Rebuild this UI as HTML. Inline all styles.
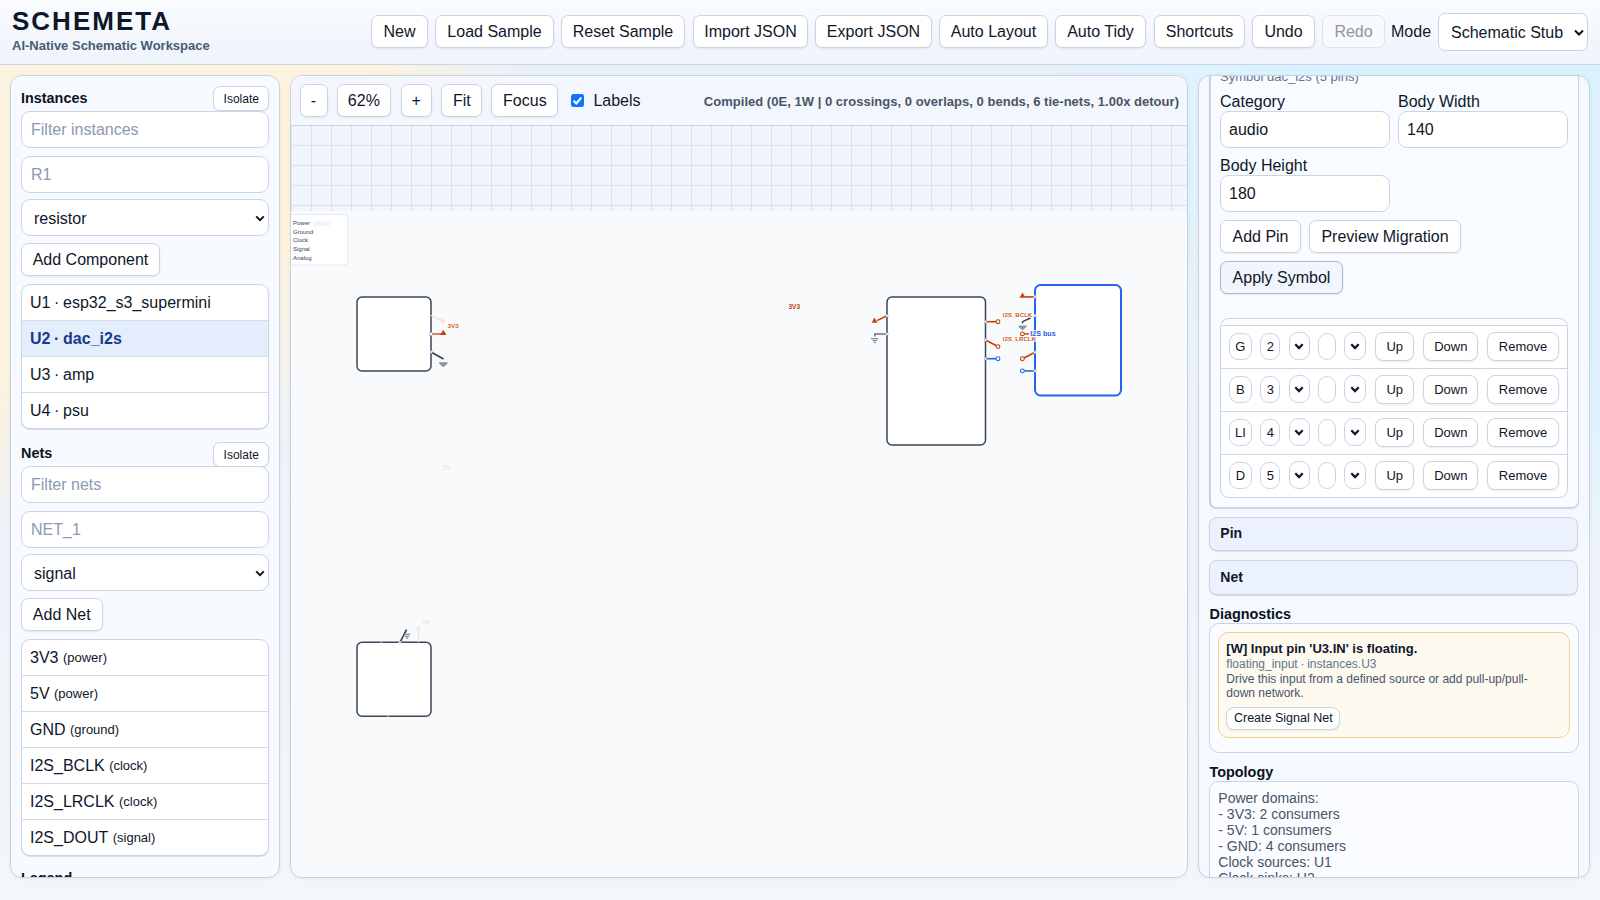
<!DOCTYPE html>
<html><head><meta charset="utf-8">
<style>
*{box-sizing:border-box}
html,body{margin:0;padding:0;width:1600px;height:900px;overflow:hidden}
body{font-family:"Liberation Sans",sans-serif;color:#0f172a;position:relative;
 background:radial-gradient(circle at 0 0,#fdf3de 0,#fdf3de 375px,rgba(253,243,222,0) 535px),radial-gradient(circle at 100% 0,#dbf2fe 0,#dbf2fe 360px,rgba(219,242,254,0) 570px),linear-gradient(180deg,#e9f0f9 64px,#f3f6fa 900px)}
.hdr{position:absolute;left:0;top:0;width:1600px;height:65px;background:linear-gradient(180deg,#f9fbff,#eff4fb);border-bottom:1px solid #c9d5e4}
.title{position:absolute;left:12px;top:6px;font-size:26px;font-weight:bold;letter-spacing:2px;color:#0f172a;line-height:30px}
.sub{position:absolute;left:12px;top:38px;font-size:13px;font-weight:bold;color:#475b75;line-height:16px}
.tools{position:absolute;left:0;top:0}
.btn{position:absolute;top:15px;text-align:center;font-family:"Liberation Sans",sans-serif;font-size:16px;color:#0f172a;background:#fff;border:1px solid #cbd5e1;border-radius:7px;height:33px;padding:0;line-height:31px;box-shadow:0 1px 2px rgba(15,23,42,.08);white-space:nowrap}
.btn.dis{color:#8f96a3;background:#f8fafc;box-shadow:none;border-color:#dbe3ee}
.sel{font-size:16px;height:37px;border:1px solid #cbd5e1;border-radius:7px;background:#fff;position:relative;padding:0 0 0 12px;line-height:35px;color:#0f172a}
.panel{position:absolute;top:75px;height:803px;border:1px solid #c7d3e3;border-radius:12px;overflow:hidden;box-shadow:0 1px 4px rgba(15,23,42,.05)}
.lp{left:10px;width:270px;background:#f7faff}
.cp{left:290px;width:898px;background:#f8fafc}
.rp{left:1198px;width:392px;background:#f5f9ff}
.abs{position:absolute}
.inp{position:absolute;background:#fff;border:1px solid #c9d5e6;border-radius:9px;font-size:16px;padding-left:9px;color:#0f172a;display:flex;align-items:center}
.ph{color:#8a9ab0}
.chev{position:absolute;right:3px;top:50%;width:10px;height:7px;margin-top:-3px}
h3{margin:0;position:absolute;font-size:14.4px;font-weight:bold;color:#0b1220}
.list{position:absolute;background:#fff;border:1px solid #c9d5e6;border-radius:9px;overflow:hidden;box-shadow:0 1px 1px rgba(100,116,139,.22)}
.row{height:35px;border-bottom:1px solid #d3dde9;font-size:16px;padding-left:8px;display:flex;align-items:center;color:#0f172a}
.row:last-child{border-bottom:none}
.row small{font-size:13px;margin-left:0}
.row.on{background:#e3edfb;color:#173a8a;font-weight:bold}
.ibtn{position:absolute;height:25px;background:#fff;border:1px solid #cbd5e1;border-radius:7px;font-size:12px;text-align:center;line-height:24px;color:#0f172a;box-shadow:0 1px 2px rgba(15,23,42,.08)}
.btn2{position:absolute;height:33px;background:#fff;border:1px solid #cbd5e1;border-radius:7px;font-size:16px;text-align:center;line-height:31px;color:#0f172a;box-shadow:0 1px 2px rgba(15,23,42,.08)}
.row{box-sizing:content-box}
.tbar{position:absolute;left:0;top:0;width:100%;height:50px;background:#f3f7fd;border-bottom:1px solid #cbd5e1}
.cb{position:absolute;width:13px;height:13px;background:#0b75ff;border-radius:2.5px}
.cb svg{position:absolute;left:0;top:0}
.grid{position:absolute;left:0;top:50px;width:100%;height:85px;background-color:#f1f6fc;background-image:linear-gradient(to right,#d9e3ef 1px,transparent 1px),linear-gradient(to bottom,transparent 19px,#d9e3ef 19px);background-size:20px 20px;background-position:0 0,0 0}
.card{position:absolute;background:#f8fbff;border:1px solid #c5d2e2;border-left-width:2px;border-radius:7px;box-shadow:0 1px 1px rgba(100,116,139,.25)}
.lab{font-size:16px;line-height:18px;color:#0f172a;white-space:nowrap}
.apply{background:#f1f5fc;border-color:#a9b8cc}
.ptab{position:absolute;background:#fff;border:1px solid #c9d5e6;border-radius:9px;overflow:hidden}
.prow{position:absolute;left:0;width:100%;height:43px;border-bottom:1px solid #cdd8e6}
.pin{position:absolute;background:#fff;border:1px solid #c9d5e6;border-radius:9px;font-size:13px;text-align:center;line-height:25.5px;color:#0f172a}
.pbtn{position:absolute;background:#fff;border:1px solid #cbd5e1;border-radius:8px;font-size:13px;text-align:center;line-height:28.5px;color:#0f172a;box-shadow:0 1px 2px rgba(15,23,42,.08)}
.pchev{position:absolute;left:50%;top:50%;width:10px;height:7px;margin:-3px 0 0 -5px}
.sumr{position:absolute;background:#ebf2fd;border:1px solid #c9d5e5;border-radius:8px;font-size:14px;font-weight:bold;padding-left:10px;line-height:31px;color:#0f172a;box-shadow:0 1px 1px rgba(100,116,139,.2)}
.hd{font-size:14.4px;font-weight:bold;line-height:17px;color:#0b1220;white-space:nowrap}
.dbox{position:absolute;background:#fbfcff;border:1px solid #c9d5e5;border-radius:10px}
.warn{position:absolute;background:#fefaf0;border:1px solid #f1d290;border-radius:10px}
.tbox{position:absolute;background:#fbfcff;border:1px solid #c9d5e5;border-radius:9px;padding:8px 8px;font-size:14px;line-height:16px;color:#475569}
</style></head><body>
<div class="hdr">
 <div class="title">SCHEMETA</div>
 <div class="sub">AI-Native Schematic Workspace</div>
 <div class="tools">
  <div class="btn" style="left:371px;width:57px">New</div>
  <div class="btn" style="left:435px;width:119px">Load Sample</div>
  <div class="btn" style="left:561px;width:124px">Reset Sample</div>
  <div class="btn" style="left:693px;width:115px">Import JSON</div>
  <div class="btn" style="left:815px;width:117px">Export JSON</div>
  <div class="btn" style="left:939px;width:109px">Auto Layout</div>
  <div class="btn" style="left:1055px;width:91px">Auto Tidy</div>
  <div class="btn" style="left:1154px;width:91px">Shortcuts</div>
  <div class="btn" style="left:1252px;width:63px">Undo</div>
  <div class="btn dis" style="left:1322px;width:63px">Redo</div>
  <div class="abs" style="left:1391px;top:23px;font-size:16px;line-height:18px">Mode</div>
  <div class="sel abs" style="left:1438px;top:13px;width:150px;height:38px;line-height:37px">Schematic Stub<svg class="chev" viewBox="0 0 10 7"><path d="M1 1.5 5 5.5 9 1.5" fill="none" stroke="#111" stroke-width="2"/></svg></div>
 </div>
</div>

<div class="panel lp">
<h3 style="left:10px;top:12.5px;line-height:18px">Instances</h3>
<div class="ibtn" style="left:202.3px;top:10.1px;width:56px">Isolate</div>
<div class="inp" style="left:10px;top:35px;width:248px;height:37px"><span class="ph">Filter instances</span></div>
<div class="inp" style="left:10px;top:80px;width:248px;height:37px"><span class="ph">R1</span></div>
<div class="inp" style="left:10px;top:123px;width:248px;height:37px;padding-left:12px;padding-top:2px">resistor<svg class="chev" viewBox="0 0 10 7"><path d="M1.2 1.3 5 5.2 8.8 1.3" fill="none" stroke="#111" stroke-width="1.9"/></svg></div>
<div class="btn2" style="left:10px;top:167px;width:139px">Add Component</div>
<div class="list" style="left:10px;top:208px;width:248px">
<div class="row" style="word-spacing:-0.8px">U1 · esp32_s3_supermini</div>
<div class="row on" style="word-spacing:-0.8px">U2 · dac_i2s</div>
<div class="row" style="word-spacing:-0.8px">U3 · amp</div>
<div class="row" style="word-spacing:-0.8px">U4 · psu</div>
</div>
<h3 style="left:10px;top:368.0px;line-height:18px">Nets</h3>
<div class="ibtn" style="left:202.3px;top:365.6px;width:56px">Isolate</div>
<div class="inp" style="left:10px;top:390px;width:248px;height:37px"><span class="ph">Filter nets</span></div>
<div class="inp" style="left:10px;top:435px;width:248px;height:37px"><span class="ph">NET_1</span></div>
<div class="inp" style="left:10px;top:478px;width:248px;height:37px;padding-left:12px;padding-top:2px">signal<svg class="chev" viewBox="0 0 10 7"><path d="M1.2 1.3 5 5.2 8.8 1.3" fill="none" stroke="#111" stroke-width="1.9"/></svg></div>
<div class="btn2" style="left:10px;top:522px;width:81.5px">Add Net</div>
<div class="list" style="left:10px;top:563px;width:248px">
<div class="row">3V3&nbsp;<small>(power)</small></div>
<div class="row">5V&nbsp;<small>(power)</small></div>
<div class="row">GND&nbsp;<small>(ground)</small></div>
<div class="row">I2S_BCLK&nbsp;<small>(clock)</small></div>
<div class="row">I2S_LRCLK&nbsp;<small>(clock)</small></div>
<div class="row">I2S_DOUT&nbsp;<small>(signal)</small></div>
</div>
<h3 style="left:10px;top:792.5px;line-height:18px">Legend</h3>
</div>
<div class="panel cp">
<div class="tbar"></div>
<div class="btn2" style="left:8.5px;top:8.2px;width:28.0px">-</div>
<div class="btn2" style="left:45.5px;top:8.2px;width:54.7px">62%</div>
<div class="btn2" style="left:109.5px;top:8.2px;width:31.5px">+</div>
<div class="btn2" style="left:150.2px;top:8.2px;width:41.3px">Fit</div>
<div class="btn2" style="left:200.4px;top:8.2px;width:67.0px">Focus</div>
<div class="cb" style="left:279.9px;top:18.1px"><svg width="13" height="13" viewBox="0 0 13 13"><path d="M2.6 6.8 5.3 9.4 10.3 3.6" fill="none" stroke="#fff" stroke-width="2.1"/></svg></div>
<div class="abs" style="left:302.4px;top:16px;font-size:16px;line-height:18px;color:#0f172a">Labels</div>
<div class="abs" style="right:8px;top:17.5px;font-size:13px;line-height:16px;font-weight:bold;letter-spacing:0.025px;color:#475569;white-space:nowrap">Compiled (0E, 1W | 0 crossings, 0 overlaps, 0 bends, 6 tie-nets, 1.00x detour)</div>
<div class="grid"></div>
<svg class="abs" style="left:-291px;top:-76px" width="1600" height="900" viewBox="0 0 1600 900">
<g font-family="Liberation Sans" >
<rect x="270" y="214.5" width="78" height="50.5" rx="4" fill="#fff" stroke="#e2e8f0" stroke-width="1"/>
<text x="293" y="224.5" font-size="6" fill="#334155">Power</text><text x="313" y="225.5" font-size="7" fill="#dfe5ec">chain</text>
<text x="293" y="234" font-size="6" fill="#334155">Ground</text>
<text x="293" y="242" font-size="6" fill="#334155">Clock</text>
<text x="293" y="251" font-size="6" fill="#334155">Signal</text>
<text x="293" y="259.5" font-size="6" fill="#334155">Analog</text>
</g>
<!-- U3 box -->
<rect x="357" y="297" width="74" height="74" rx="5" fill="#fff" stroke="#3b4656" stroke-width="1.5"/>
<path d="M429.5 315 444 321.5" stroke="#f5dccf" stroke-width="1.1" fill="none"/><path d="M441 318.5 445 322 440 322.5" stroke="#f5dccf" stroke-width="1" fill="none"/>
<text x="447.8" y="328.2" font-size="6" font-weight="bold" fill="#d8652b">3V3</text>
<path d="M431 334 H441" stroke="#c9541c" stroke-width="1.4"/><path d="M443.3 329.8 446.5 335 440 335Z" fill="#c2410c"/>
<rect x="429.8" y="332.6" width="2.4" height="2.8" fill="#fff" stroke="#94a3b8" stroke-width=".5"/>
<path d="M431 352 443.5 359" stroke="#334155" stroke-width="1.6"/>
<circle cx="431" cy="352" r="1.3" fill="#fff" stroke="#94a3b8" stroke-width=".6"/>
<path d="M439 362.2 H447.6 V363.6 L443.3 367.3 L439 363.6Z" fill="#8b95a6"/>
<!-- standalone 3V3 -->
<text x="788.5" y="309" font-size="6.5" font-weight="bold" fill="#c2410c">3V3</text>
<text x="443" y="470" font-size="6.5" font-weight="bold" fill="#f4e7e0">5V</text>
<!-- U1 box -->
<rect x="887" y="297" width="98.5" height="148" rx="5" fill="#fff" stroke="#3b4656" stroke-width="1.5"/>
<path d="M887 315.7 877 320.6" stroke="#c2410c" stroke-width="1.6"/><path d="M874.3 317.6 877.5 322.8 871.8 322.8Z" fill="#c2410c"/>
<circle cx="887" cy="315.7" r="1.3" fill="#fff" stroke="#94a3b8" stroke-width=".6"/>
<path d="M887 334 H874.8 V336.5" stroke="#64748b" stroke-width="1.6" fill="none"/>
<circle cx="887" cy="334" r="1.3" fill="#fff" stroke="#94a3b8" stroke-width=".6"/>
<path d="M871 338.7 H878.5 M872.5 340.7 H877 M874 342.6 H875.6" stroke="#64748b" stroke-width="1"/>
<path d="M985.5 321.7 H996" stroke="#c2410c" stroke-width="1.6"/><circle cx="998" cy="321.7" r="1.9" fill="#fff" stroke="#c2410c" stroke-width="1.1"/>
<path d="M985.5 340 996.5 345.8" stroke="#c2410c" stroke-width="1.6"/><circle cx="998" cy="346.6" r="1.9" fill="#fff" stroke="#c2410c" stroke-width="1.1"/>
<path d="M985.5 358.7 H996" stroke="#2563eb" stroke-width="1.6"/><circle cx="998" cy="358.7" r="1.9" fill="#fff" stroke="#2563eb" stroke-width="1.1"/>
<circle cx="985.5" cy="321.7" r="1.3" fill="#fff" stroke="#94a3b8" stroke-width=".6"/>
<circle cx="985.5" cy="340" r="1.3" fill="#fff" stroke="#94a3b8" stroke-width=".6"/>
<circle cx="985.5" cy="358.7" r="1.3" fill="#fff" stroke="#94a3b8" stroke-width=".6"/>
<!-- U2 box -->
<rect x="1035" y="285" width="86" height="110.5" rx="5.5" fill="#fff" stroke="#2563eb" stroke-width="2"/>
<path d="M1035 296.9 H1025" stroke="#c2410c" stroke-width="1.6"/><path d="M1022.5 292.6 1025.6 297.8 1019.5 297.8Z" fill="#c2410c"/>
<text x="1002.8" y="316.8" font-size="6.1" font-weight="bold" fill="#cf5a22" stroke="#fff" stroke-width="1.6" paint-order="stroke" stroke-linejoin="round">I2S_BCLK</text>
<path d="M1030.5 318 1022.5 321.6 V323.5" stroke="#334155" stroke-width="1.4" fill="none"/>
<path d="M1018.5 325.5 H1026.5 V327 L1022.5 330.3 L1018.5 327Z" fill="#8b95a6"/>
<circle cx="1035" cy="315.6" r="1.3" fill="#fff" stroke="#94a3b8" stroke-width=".6"/>
<path d="M1024.5 333.9 H1029" stroke="#c2410c" stroke-width="1.4"/><circle cx="1022.4" cy="333.9" r="1.9" fill="#fff" stroke="#c2410c" stroke-width="1.1"/>
<text x="1030.2" y="335.6" font-size="7.2" font-weight="bold" fill="#1f5fe6" stroke="#fff" stroke-width="2" paint-order="stroke" stroke-linejoin="round">I2S bus</text>
<text x="1002.8" y="341.2" font-size="6.1" font-weight="bold" fill="#cf5a22" stroke="#fff" stroke-width="1.6" paint-order="stroke" stroke-linejoin="round">I2S_LRCLK</text>
<path d="M1035 352.2 1024 358" stroke="#c2410c" stroke-width="1.6"/><circle cx="1022.4" cy="358.7" r="1.9" fill="#fff" stroke="#c2410c" stroke-width="1.1"/>
<path d="M1035 370.9 H1024.5" stroke="#2563eb" stroke-width="1.6"/><circle cx="1022.4" cy="370.9" r="1.9" fill="#fff" stroke="#2563eb" stroke-width="1.1"/>
<circle cx="1035" cy="296.9" r="1.3" fill="#fff" stroke="#94a3b8" stroke-width=".6"/>
<circle cx="1035" cy="352.2" r="1.3" fill="#fff" stroke="#94a3b8" stroke-width=".6"/>
<circle cx="1035" cy="370.9" r="1.3" fill="#fff" stroke="#94a3b8" stroke-width=".6"/>
<!-- U4 box -->
<rect x="357" y="642.3" width="74" height="74" rx="5" fill="#fff" stroke="#3b4656" stroke-width="1.5"/>
<circle cx="381.5" cy="642.3" r="1.1" fill="#a3adbb"/>
<circle cx="387.7" cy="716.3" r="1.1" fill="#a3adbb"/>
<path d="M400 642.3 406.5 629.6" stroke="#334155" stroke-width="1.6"/>
<path d="M404 634.2 H410.2 M405 636.3 H409.2 M406 638.2 H408.2" stroke="#64748b" stroke-width="1"/>
<circle cx="400" cy="642.3" r="1.2" fill="#fff" stroke="#94a3b8" stroke-width=".6"/>
<path d="M418.5 642.3 V627" stroke="#f2e0d6" stroke-width="1.1"/><path d="M416 630 418.5 626.5 421 630" stroke="#f2e0d6" stroke-width="1" fill="none"/>
<text x="422.8" y="624" font-size="6" font-weight="bold" fill="#f2e3da">5V</text>
</svg>
</div>
<div class="panel rp">
<div class="card" style="left:10.0px;top:-300px;width:370px;height:731.5px"></div>
<div class="abs" style="left:21.0px;top:-7.2px;font-size:13px;line-height:15px;color:#64748b;white-space:nowrap">Symbol dac_i2s (5 pins)</div>
<div class="abs lab" style="left:21.0px;top:17.2px">Category</div>
<div class="abs lab" style="left:199.0px;top:17.2px">Body Width</div>
<div class="abs lab" style="left:21.0px;top:81.1px">Body Height</div>
<div class="inp" style="left:21.0px;top:35.0px;width:169.5px;height:37px;padding-left:8px">audio</div>
<div class="inp" style="left:199.0px;top:35.0px;width:170px;height:37px;padding-left:8px">140</div>
<div class="inp" style="left:21.0px;top:99.0px;width:169.5px;height:37px;padding-left:8px">180</div>
<div class="btn2" style="left:21px;top:144px;width:81px">Add Pin</div>
<div class="btn2" style="left:110px;top:144px;width:152px">Preview Migration</div>
<div class="btn2 apply" style="left:21px;top:185px;width:123px">Apply Symbol</div>
<div class="ptab" style="left:21.3px;top:242.3px;width:347.7px;height:179.5px">
<div class="prow" style="top:-36.7px"></div>
<div class="prow" style="top:6.3px"><div class="pin" style="left:7.8px;top:7.6px;width:22.6px;height:26.5px">G</div><div class="pin" style="left:38.9px;top:7.6px;width:20.3px;height:26.5px">2</div><div class="pin" style="left:67.7px;top:6.7px;width:20.8px;height:28.2px"><svg class="pchev" viewBox="0 0 10 7"><path d="M1.3 1.3 5 5 8.7 1.3" fill="none" stroke="#0f172a" stroke-width="2.3"/></svg></div><div class="pin" style="left:96.8px;top:7.6px;width:17.6px;height:26.5px"></div><div class="pin" style="left:122.8px;top:6.7px;width:22.4px;height:28.2px"><svg class="pchev" viewBox="0 0 10 7"><path d="M1.3 1.3 5 5 8.7 1.3" fill="none" stroke="#0f172a" stroke-width="2.3"/></svg></div><div class="pbtn" style="left:154.0px;top:6.7px;width:39.0px;height:29px">Up</div><div class="pbtn" style="left:202.1px;top:6.7px;width:54.8px;height:29px">Down</div><div class="pbtn" style="left:266.1px;top:6.7px;width:71.2px;height:29px">Remove</div></div>
<div class="prow" style="top:49.3px"><div class="pin" style="left:7.8px;top:7.6px;width:22.6px;height:26.5px">B</div><div class="pin" style="left:38.9px;top:7.6px;width:20.3px;height:26.5px">3</div><div class="pin" style="left:67.7px;top:6.7px;width:20.8px;height:28.2px"><svg class="pchev" viewBox="0 0 10 7"><path d="M1.3 1.3 5 5 8.7 1.3" fill="none" stroke="#0f172a" stroke-width="2.3"/></svg></div><div class="pin" style="left:96.8px;top:7.6px;width:17.6px;height:26.5px"></div><div class="pin" style="left:122.8px;top:6.7px;width:22.4px;height:28.2px"><svg class="pchev" viewBox="0 0 10 7"><path d="M1.3 1.3 5 5 8.7 1.3" fill="none" stroke="#0f172a" stroke-width="2.3"/></svg></div><div class="pbtn" style="left:154.0px;top:6.7px;width:39.0px;height:29px">Up</div><div class="pbtn" style="left:202.1px;top:6.7px;width:54.8px;height:29px">Down</div><div class="pbtn" style="left:266.1px;top:6.7px;width:71.2px;height:29px">Remove</div></div>
<div class="prow" style="top:92.3px"><div class="pin" style="left:7.8px;top:7.6px;width:22.6px;height:26.5px">LI</div><div class="pin" style="left:38.9px;top:7.6px;width:20.3px;height:26.5px">4</div><div class="pin" style="left:67.7px;top:6.7px;width:20.8px;height:28.2px"><svg class="pchev" viewBox="0 0 10 7"><path d="M1.3 1.3 5 5 8.7 1.3" fill="none" stroke="#0f172a" stroke-width="2.3"/></svg></div><div class="pin" style="left:96.8px;top:7.6px;width:17.6px;height:26.5px"></div><div class="pin" style="left:122.8px;top:6.7px;width:22.4px;height:28.2px"><svg class="pchev" viewBox="0 0 10 7"><path d="M1.3 1.3 5 5 8.7 1.3" fill="none" stroke="#0f172a" stroke-width="2.3"/></svg></div><div class="pbtn" style="left:154.0px;top:6.7px;width:39.0px;height:29px">Up</div><div class="pbtn" style="left:202.1px;top:6.7px;width:54.8px;height:29px">Down</div><div class="pbtn" style="left:266.1px;top:6.7px;width:71.2px;height:29px">Remove</div></div>
<div class="prow" style="top:135.3px"><div class="pin" style="left:7.8px;top:7.6px;width:22.6px;height:26.5px">D</div><div class="pin" style="left:38.9px;top:7.6px;width:20.3px;height:26.5px">5</div><div class="pin" style="left:67.7px;top:6.7px;width:20.8px;height:28.2px"><svg class="pchev" viewBox="0 0 10 7"><path d="M1.3 1.3 5 5 8.7 1.3" fill="none" stroke="#0f172a" stroke-width="2.3"/></svg></div><div class="pin" style="left:96.8px;top:7.6px;width:17.6px;height:26.5px"></div><div class="pin" style="left:122.8px;top:6.7px;width:22.4px;height:28.2px"><svg class="pchev" viewBox="0 0 10 7"><path d="M1.3 1.3 5 5 8.7 1.3" fill="none" stroke="#0f172a" stroke-width="2.3"/></svg></div><div class="pbtn" style="left:154.0px;top:6.7px;width:39.0px;height:29px">Up</div><div class="pbtn" style="left:202.1px;top:6.7px;width:54.8px;height:29px">Down</div><div class="pbtn" style="left:266.1px;top:6.7px;width:71.2px;height:29px">Remove</div></div>
</div>
<div class="sumr" style="left:10.3px;top:441px;width:369px;height:34px">Pin</div>
<div class="sumr" style="left:10.3px;top:484px;width:369px;height:34.5px;line-height:32.5px">Net</div>
<div class="abs hd" style="left:10.5px;top:529.5px">Diagnostics</div>
<div class="dbox" style="left:10.2px;top:547.4px;width:369.5px;height:129.3px"></div>
<div class="warn" style="left:19.3px;top:556.2px;width:351.7px;height:105.6px"></div>
<div class="abs" style="left:27.3px;top:565.1px;font-size:13px;line-height:15px;font-weight:bold;color:#0f172a;white-space:nowrap">[W] Input pin 'U3.IN' is floating.</div>
<div class="abs" style="left:27.3px;top:580.5px;font-size:12px;line-height:15px;color:#64748b;white-space:nowrap;word-spacing:-0.6px">floating_input · instances.U3</div>
<div class="abs" style="left:27.3px;top:595.7px;font-size:12px;line-height:14.7px;color:#475569;width:330px">Drive this input from a defined source or add pull-up/pull-<br>down network.</div>
<div class="ibtn" style="left:27.2px;top:631.4px;width:114.2px;height:22.6px;line-height:20.6px;font-size:12.5px;border-radius:8px">Create Signal Net</div>
<div class="abs hd" style="left:10.5px;top:687.5px">Topology</div>
<div class="tbox" style="left:10.3px;top:705.1px;width:369.7px;height:200px">Power domains:<br>- 3V3: 2 consumers<br>- 5V: 1 consumers<br>- GND: 4 consumers<br>Clock sources: U1<br>Clock sinks: U2</div>
</div>
</body></html>
